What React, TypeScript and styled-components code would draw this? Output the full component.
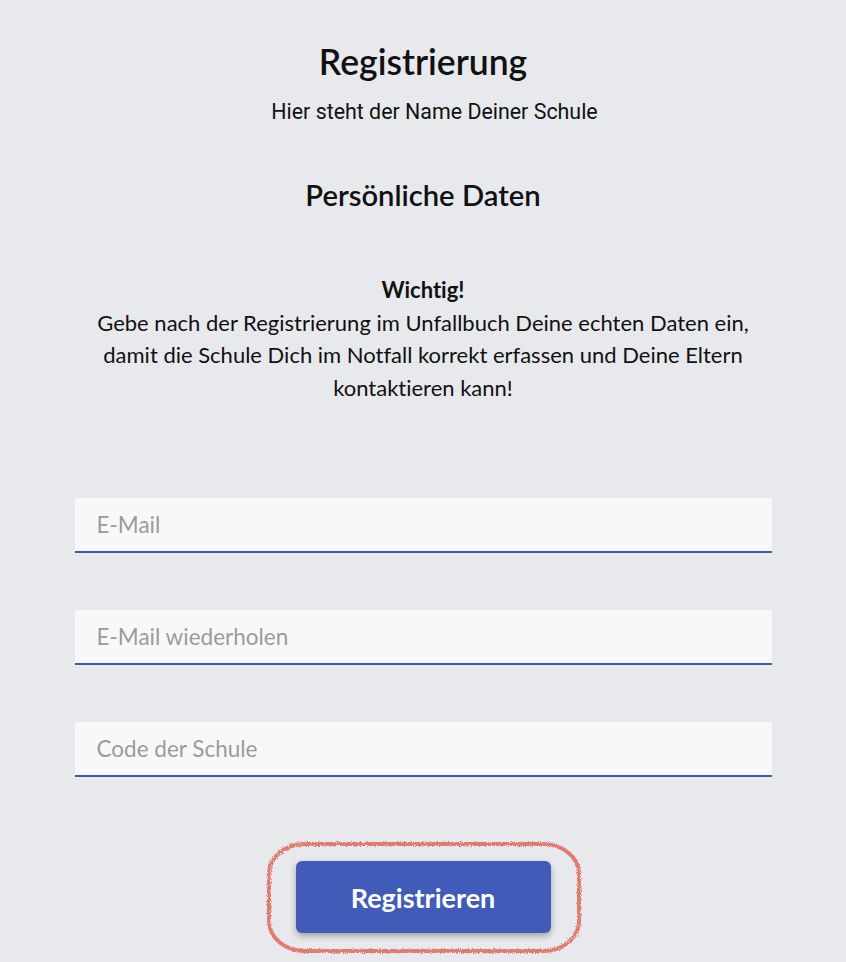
import { createGlobalStyle, styled } from 'styled-components';

const GlobalStyle = createGlobalStyle`
  body {
    margin: 0;
    background: #e8e9ed;
    font-family: Lato, "Noto Sans", sans-serif;
    color: #111;
    font-variant-ligatures: no-common-ligatures;
  }
`;

function App() {
  return (
    <>
      <GlobalStyle />
      <Page>
        <Title>Registrierung</Title>
        <School>Hier steht der Name Deiner Schule</School>
        <Section>Persönliche Daten</Section>
        <Notice>
          <strong>Wichtig!</strong>
          <br />
          Gebe nach der Registrierung im Unfallbuch Deine echten Daten ein,
          <br />
          damit die Schule Dich im Notfall korrekt erfassen und Deine Eltern
          <br />
          kontaktieren kann!
        </Notice>
        <Form>
          <Field type="email" placeholder="E-Mail" />
          <Field type="email" placeholder="E-Mail wiederholen" />
          <Field type="text" placeholder="Code der Schule" />
          <ButtonWrap>
            <Scribble viewBox="0 0 316 116">
              <defs>
                <filter id="crayon" x="-5%" y="-5%" width="110%" height="110%">
                  <feTurbulence type="fractalNoise" baseFrequency="1.1" numOctaves="2" seed="3" />
                  <feDisplacementMap in="SourceGraphic" scale="4" />
                </filter>
              </defs>
              <rect
                x="3"
                y="4"
                width="310"
                height="107"
                rx="36"
                ry="30"
                fill="none"
                stroke="#e0503f"
                strokeWidth="4"
                opacity="0.7"
                filter="url(#crayon)"
              />
            </Scribble>
            <SubmitButton type="button">Registrieren</SubmitButton>
          </ButtonWrap>
        </Form>
      </Page>
    </>
  );
}

const Page = styled.main`
  display: flex;
  flex-direction: column;
  align-items: center;
  padding: 40px 0 60px;
`;

const Title = styled.h1`
  margin: 0;
  font-size: 35.5px;
  font-weight: 600;
  line-height: 44px;
`;

const School = styled.p`
  margin: 16px 0 0 23px;
  font-family: Roboto, sans-serif;
  font-size: 21.4px;
  line-height: 24px;
`;

const Section = styled.h2`
  margin: 54px 0 0;
  font-size: 29.2px;
  font-weight: 600;
  line-height: 34px;
`;

const Notice = styled.p`
  margin: 62px 0 0;
  font-size: 22px;
  line-height: 32.5px;
  text-align: center;

  strong {
    font-weight: 700;
  }
`;

const Form = styled.form`
  display: flex;
  flex-direction: column;
  align-items: center;
  gap: 57px;
  width: 697px;
  margin-top: 94px;
`;

const Field = styled.input`
  box-sizing: border-box;
  width: 100%;
  height: 55px;
  padding: 0 22px;
  border: none;
  border-bottom: 2px solid #4059b8;
  background: #f8f8fa;
  font-family: Lato, sans-serif;
  font-size: 22.5px;
  color: #222;
  outline: none;

  &::placeholder {
    color: #9b9b9b;
  }
`;

const ButtonWrap = styled.div`
  position: relative;
  margin-top: 27px;
`;

const Scribble = styled.svg`
  position: absolute;
  left: -30px;
  top: -21px;
  width: 316px;
  height: 116px;
  overflow: visible;
  pointer-events: none;
`;

const SubmitButton = styled.button`
  position: relative;
  width: 255px;
  height: 72px;
  border: none;
  border-radius: 6px;
  background: #405cb8;
  color: #fff;
  font-family: Lato, sans-serif;
  font-size: 27px;
  font-weight: 700;
  box-shadow: 0 3px 6px rgba(0, 0, 0, 0.3);
  cursor: pointer;
`;

export default App;
